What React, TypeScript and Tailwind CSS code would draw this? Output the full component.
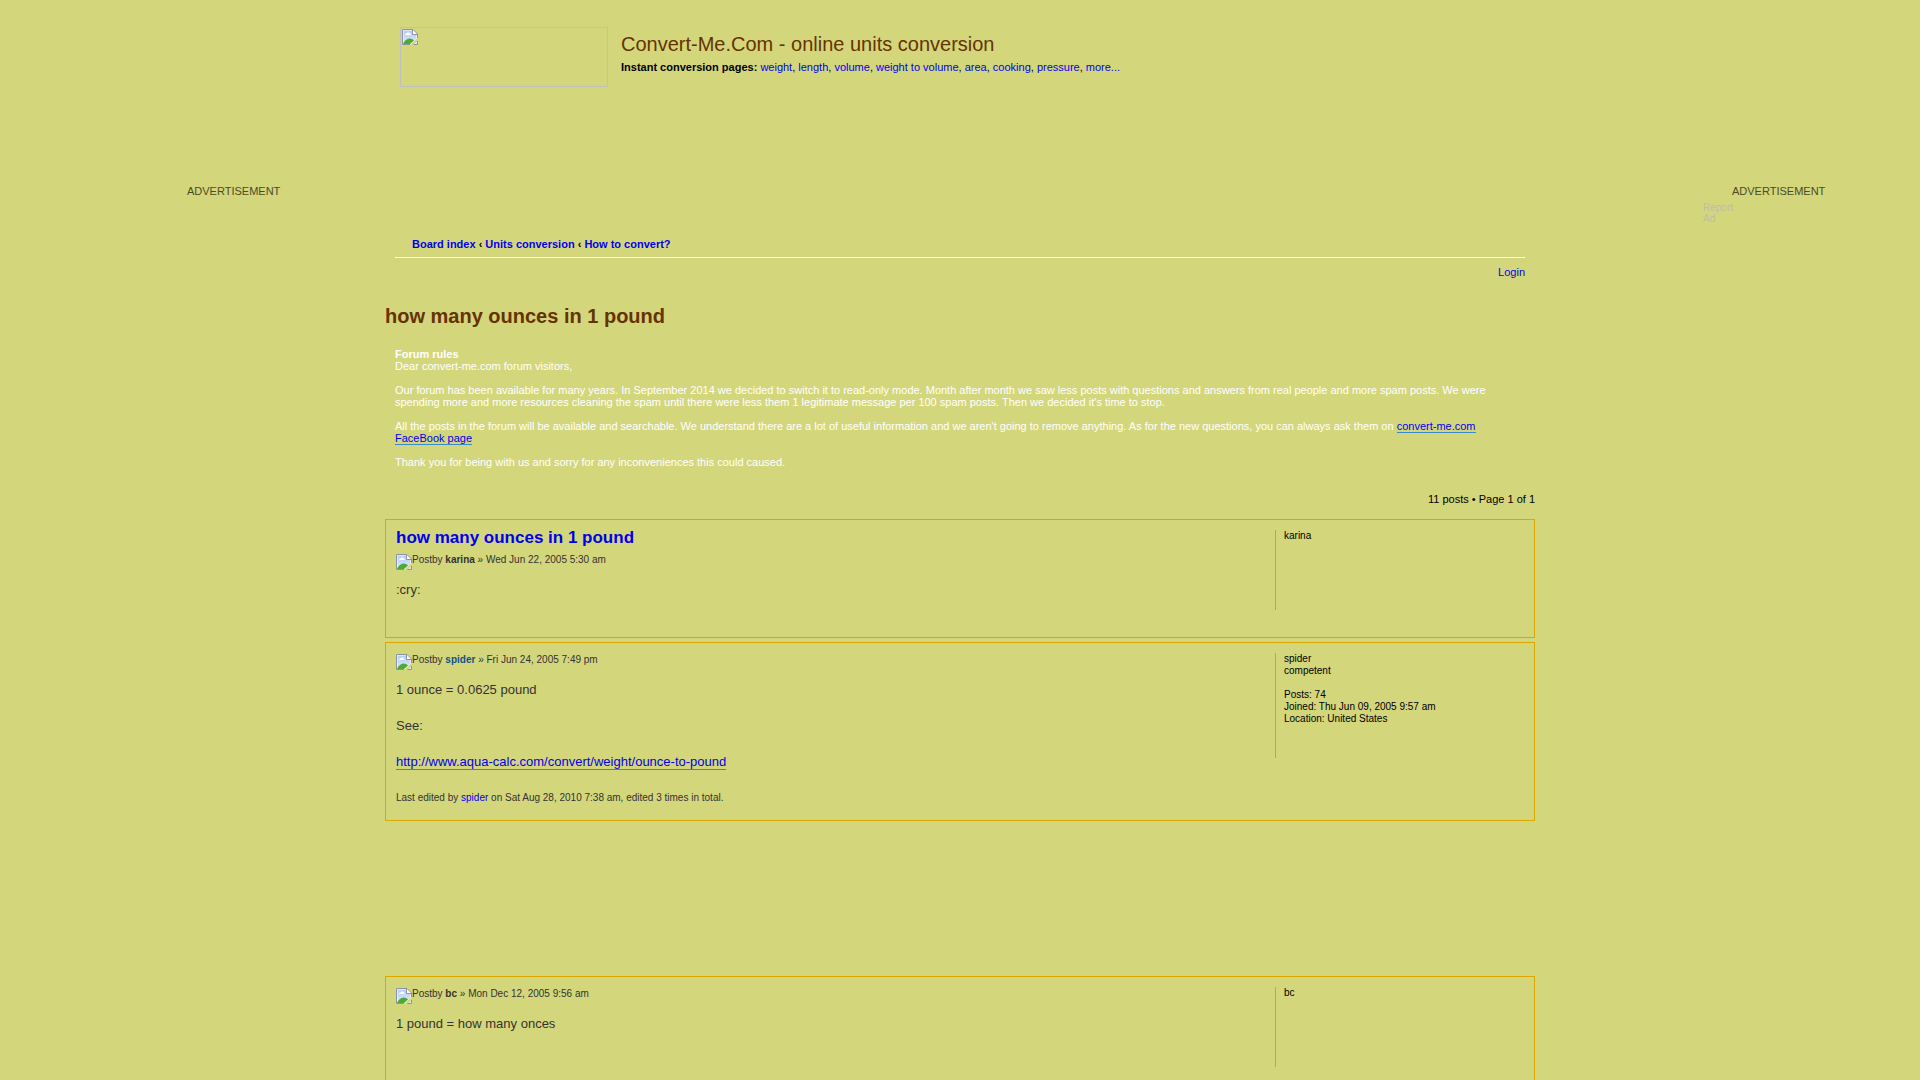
import React from "react";

function BrokenImage() {
  return (
    <svg width="16" height="16" viewBox="0 0 16 16" className="block shrink-0" aria-hidden="true">
      <defs>
        <linearGradient id="sky" x1="0" y1="0" x2="0" y2="1">
          <stop offset="0" stopColor="#b4cdf6" />
          <stop offset="1" stopColor="#dbe6fa" />
        </linearGradient>
      </defs>
      <path d="M0.5 0.5H11L15.5 5V9L8.5 15.5H0.5Z" fill="#fff" />
      <path d="M1.5 1.5H10.5V5.5H14.5V9.5L9 14.5H1.5Z" fill="url(#sky)" />
      <path d="M3 6Q3 4.5 4.5 4.5Q5 3 6.5 3.5Q8 3.5 8 5Q9 5 9 6Z" fill="#fff" />
      <path d="M1 15Q3 10 7.5 9.5Q10.5 9.5 12 11.5L8 15Z" fill="#4dab34" />
      <path d="M11.5 15.5L15.5 12V15.5Z" fill="#dbe6fa" />
      <path
        d="M8 15.5H0.5V0.5H11L15.5 5V9M10.5 0.5V5.5H15.5M15.5 12V15.5H11.5"
        fill="none"
        stroke="#8f939b"
      />
    </svg>
  );
}

function Link({ children, className = "" }: { children: React.ReactNode; className?: string }) {
  return (
    <a href="#" className={`text-[#0000ee] ${className}`}>
      {children}
    </a>
  );
}

const pages = ["weight", "length", "volume", "weight to volume", "area", "cooking", "pressure", "more..."];

function Post({
  title,
  author,
  authorClass = "",
  date,
  profile,
  children,
}: {
  title?: string;
  author: string;
  authorClass?: string;
  date: string;
  profile: string[];
  children: React.ReactNode;
}) {
  return (
    <article className="mb-1 flex items-start border border-[#dba800] px-2.5 pt-2.5 pb-4">
      <div className="min-w-0 flex-1 text-[#333333]">
        {title && (
          <h3 className="-mt-0.5 mb-0.5 text-[17px] leading-5 font-bold">
            <Link>{title}</Link>
          </h3>
        )}
        <p className={title ? "flex pt-1 text-[10px] leading-3" : "flex pt-px text-[10px] leading-3"}>
          <BrokenImage />
          <span>
            Postby <strong className={authorClass}>{author}</strong> » {date}
          </span>
        </p>
        <div className="mt-[11px] min-h-10 text-[13px] leading-[18px]">{children}</div>
      </div>
      <dl className="ml-[22px] min-h-20 w-[249px] border-l border-[#dba800] pb-[33px] pl-2 text-[10px] leading-3 text-black">
        {profile.map((line, i) => (
          <dd key={i} className="min-h-3">
            {line}
          </dd>
        ))}
      </dl>
    </article>
  );
}

export default function App() {
  return (
    <div className="flex min-h-screen items-start bg-[#d4d67c] font-['Liberation_Sans',Arial,sans-serif] text-[11px] leading-3 text-black">
      <aside className="min-w-0 flex-1">
        <p className="pt-[185px] pl-[187px] text-[#4b4b26]">ADVERTISEMENT</p>
      </aside>

      <main className="h-screen w-[1150px] overflow-hidden">
        <header className="flex h-[237px] pt-[27px] pl-[15px]">
          <a
            href="#"
            aria-label="Convert-Me.Com home"
            className="block h-[60px] w-52 border border-[#c0c0c0] p-px"
          >
            <BrokenImage />
          </a>
          <div className="ml-[13px] pt-[5px]">
            <h1 className="text-xl leading-6 text-[#663300]">Convert-Me.Com - online units conversion</h1>
            <p className="mt-[5px]">
              <strong>Instant conversion pages:</strong>{" "}
              {pages.map((p, i) => (
                <React.Fragment key={p}>
                  {i > 0 && ", "}
                  <Link>{p}</Link>
                </React.Fragment>
              ))}
            </p>
          </div>
        </header>

        <div className="px-2.5">
          <nav className="border-b border-white pt-px pb-[7px] pl-[17px] font-bold">
            <Link>Board index</Link> ‹ <Link>Units conversion</Link> ‹ <Link>How to convert?</Link>
          </nav>
          <p className="mt-2 text-right">
            <Link>Login</Link>
          </p>
        </div>

        <h2 className="mt-[26px] text-xl leading-6 font-bold text-[#663300]">how many ounces in 1 pound</h2>

        <section className="mt-5 px-2.5 text-white">
          <strong className="block">Forum rules</strong>
          <p>Dear convert-me.com forum visitors,</p>
          <p className="mt-3">
            Our forum has been available for many years. In September 2014 we decided to switch it to read-only mode.
            Month after month we saw less posts with questions and answers from real people and more spam posts. We
            were spending more and more resources cleaning the spam until there were less them 1 legitimate message per
            100 spam posts. Then we decided it's time to stop.
          </p>
          <p className="mt-3">
            All the posts in the forum will be available and searchable. We understand there are a lot of useful
            information and we aren't going to remove anything. As for the new questions, you can always ask them on{" "}
            <Link className="border-b border-[#368ad2]">convert-me.com FaceBook page</Link>
          </p>
          <p className="mt-3">Thank you for being with us and sorry for any inconveniences this could caused.</p>
        </section>

        <p className="mt-[25px] mb-3.5 text-right">11 posts • Page 1 of 1</p>

        <Post title="how many ounces in 1 pound" author="karina" date="Wed Jun 22, 2005 5:30 am" profile={["karina"]}>
          :cry:
        </Post>
        <Post
          author="spider"
          authorClass="text-[#105289]"
          date="Fri Jun 24, 2005 7:49 pm"
          profile={["spider", "competent", "", "Posts: 74", "Joined: Thu Jun 09, 2005 9:57 am", "Location: United States"]}
        >
          <p>1 ounce = 0.0625 pound</p>
          <p className="mt-[18px]">See:</p>
          <p className="mt-[18px]">
            <Link className="border-b border-[#368ad2]">http://www.aqua-calc.com/convert/weight/ounce-to-pound</Link>
          </p>
          <p className="mt-[18px] border-t border-dashed border-[#cccccc] pt-0.5 text-[10px] leading-3">
            Last edited by <Link>spider</Link> on Sat Aug 28, 2010 7:38 am, edited 3 times in total.
          </p>
        </Post>
        <div className="h-[151px]" />
        <Post author="bc" date="Mon Dec 12, 2005 9:56 am" profile={["bc"]}>
          1 pound = how many onces
        </Post>
      </main>

      <aside className="min-w-0 flex-1">
        <div className="pt-[185px] pl-[168px]">
          <p className="pl-[29px] text-[#4b4b26]">ADVERTISEMENT</p>
          <p className="mt-[5px] w-8 text-[10px] leading-[11px] text-[#bdbdae]">Report Ad</p>
        </div>
      </aside>
    </div>
  );
}
